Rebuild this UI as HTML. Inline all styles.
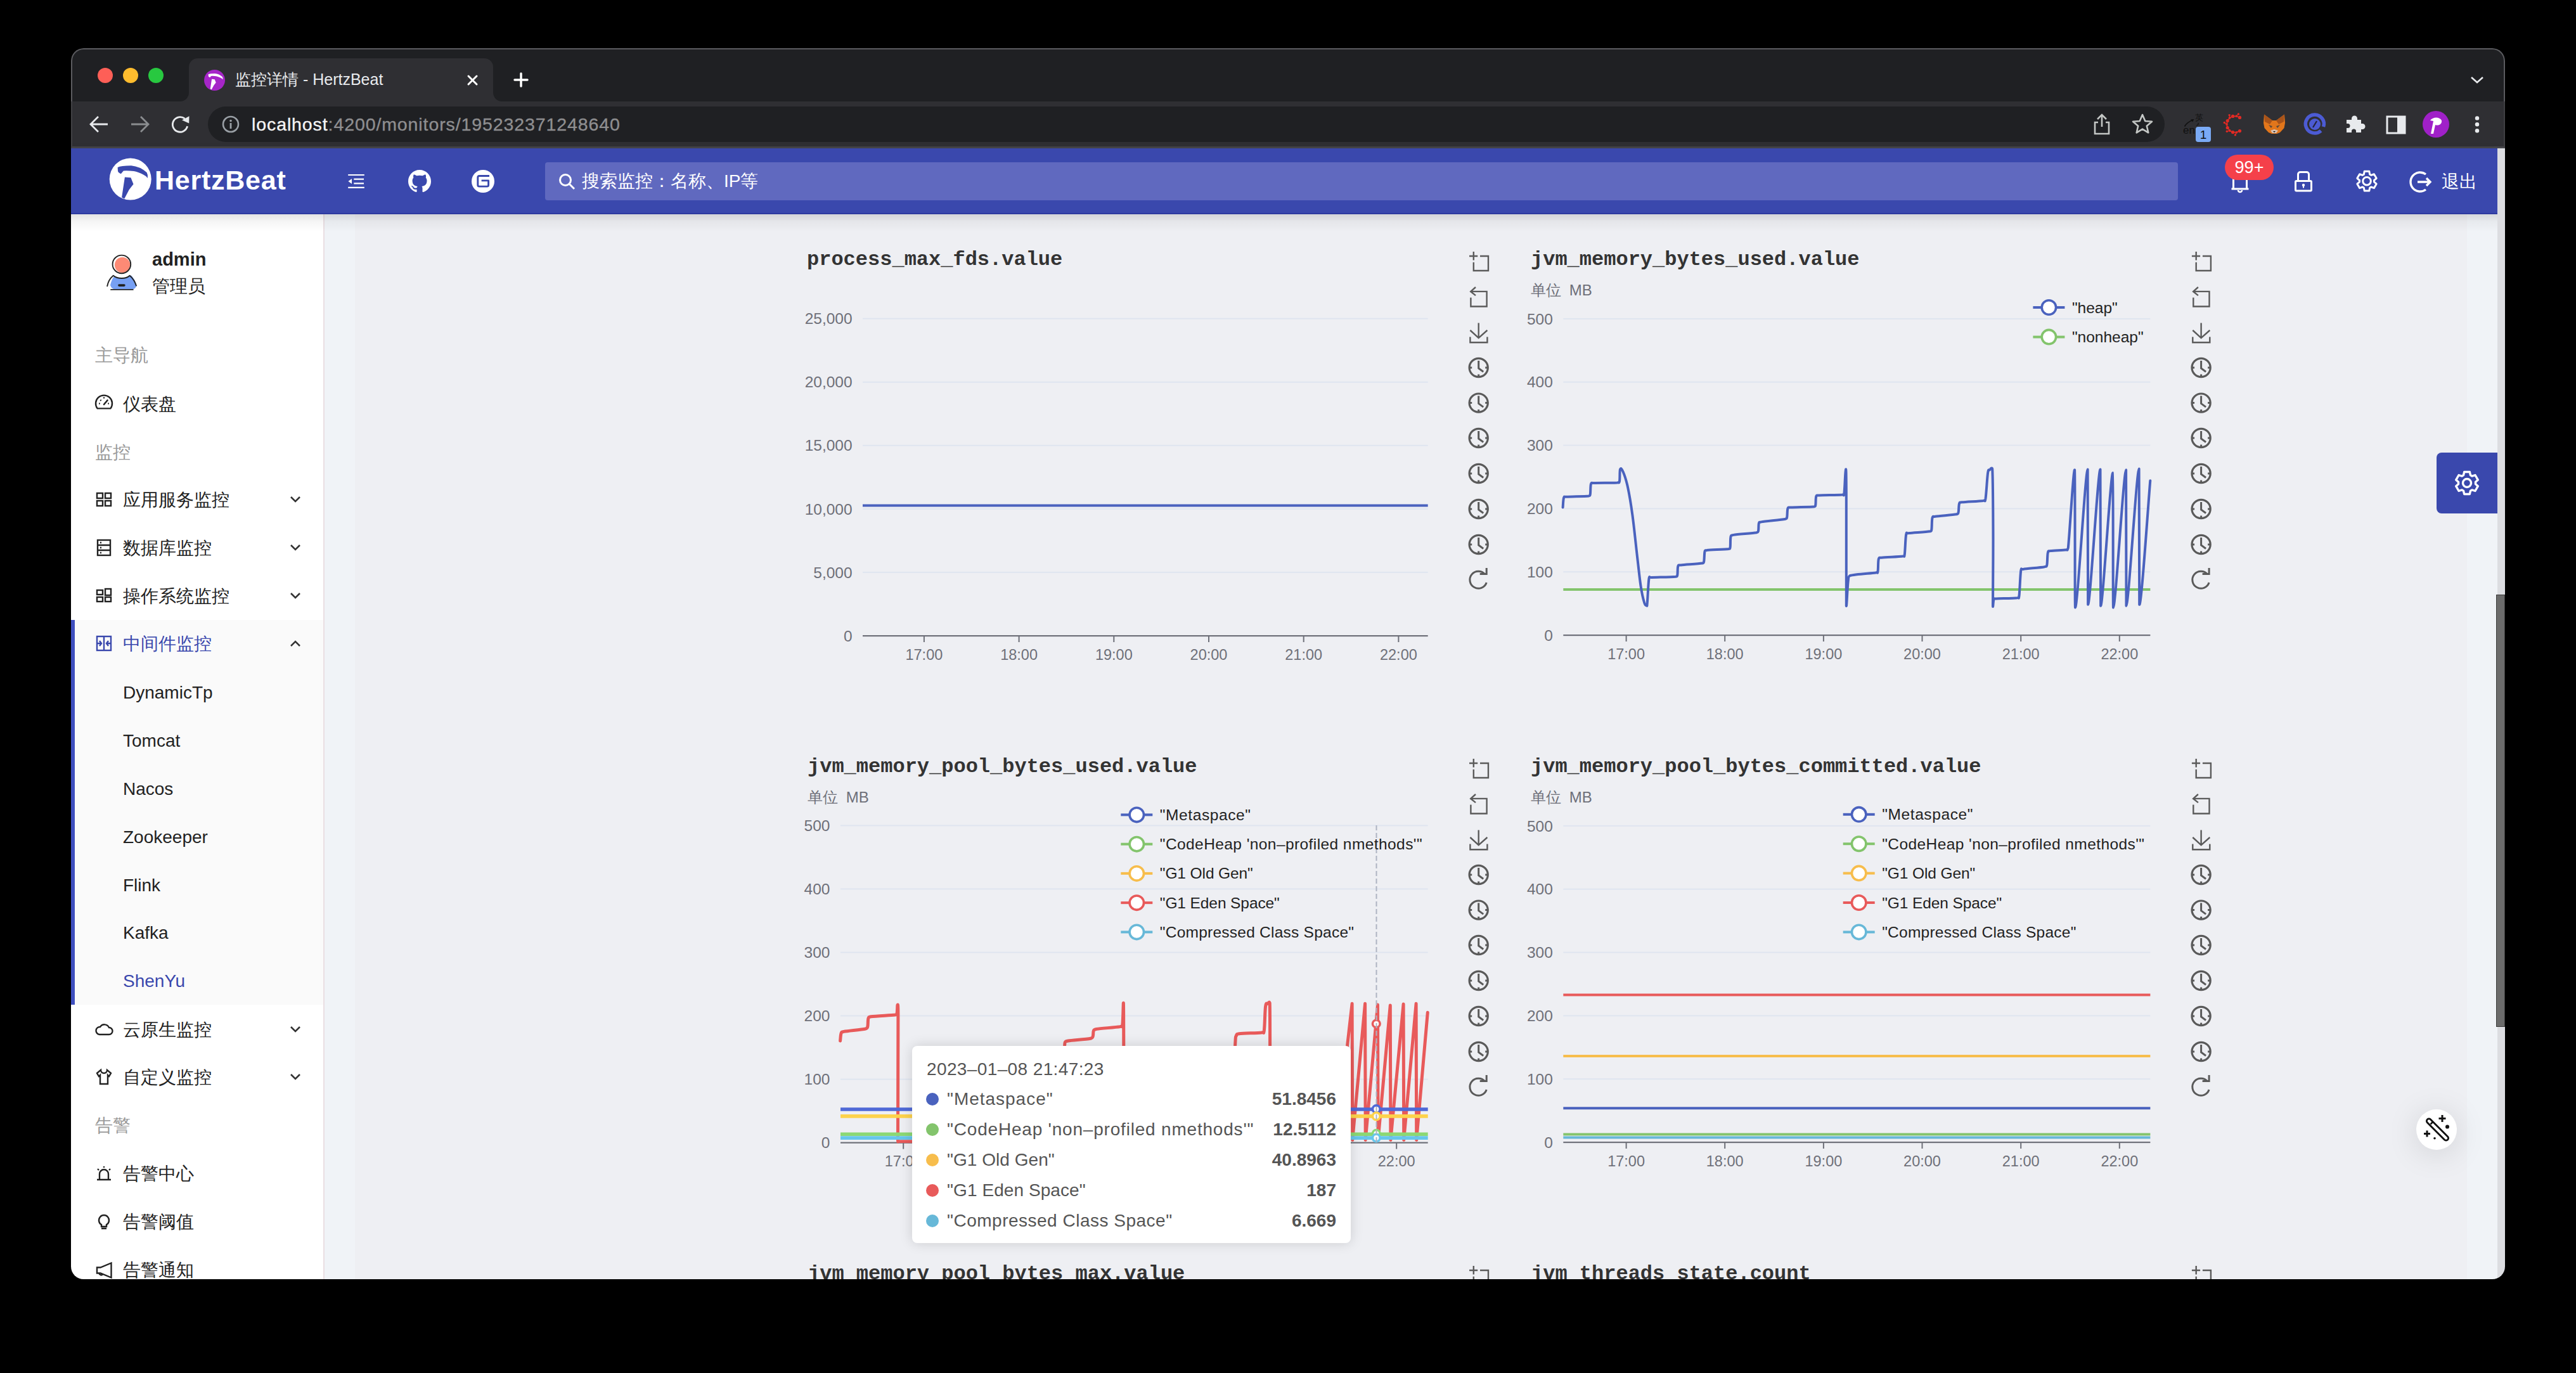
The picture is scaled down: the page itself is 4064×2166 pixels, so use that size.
<!DOCTYPE html><html><head><meta charset="utf-8"><style>
*{box-sizing:border-box;margin:0;padding:0}
html,body{width:4064px;height:2166px;overflow:hidden;background:#000;font-family:"Liberation Sans",sans-serif}
.a{position:absolute}
#win{position:absolute;left:0;top:0;width:4064px;height:2166px;clip-path:inset(76px 112px 148px 112px round 20px)}
.t{position:absolute;white-space:nowrap;line-height:1}
svg{position:absolute;overflow:visible}
</style></head><body>
<div id="win">
<div class="a" style="left:112px;top:76px;width:3840px;height:84px;background:#1f2023"></div>
<div class="a" style="left:298px;top:92px;width:480px;height:68px;background:#2f2f33;border-radius:14px 14px 0 0"></div>
<svg style="left:284px;top:146px" width="14" height="14"><path d="M0 14 A14 14 0 0 0 14 0 V14Z" fill="#2f2f33"/></svg>
<svg style="left:778px;top:146px" width="14" height="14"><path d="M14 14 A14 14 0 0 1 0 0 V14Z" fill="#2f2f33"/></svg>
<div class="a" style="left:112px;top:160px;width:3840px;height:72px;background:#2f2f33"></div>
<div class="a" style="left:112px;top:231px;width:3840px;height:3px;background:#47474b"></div>
<div class="a" style="left:112px;top:76px;width:3840px;height:84px;border:2px solid #5b5b5f;border-bottom:none;border-radius:20px 20px 0 0"></div>
<div class="a" style="left:112px;top:160px;width:2px;height:72px;background:#404044"></div>
<div class="a" style="left:3950px;top:160px;width:2px;height:72px;background:#404044"></div>
<div class="a" style="left:154px;top:107px;width:24px;height:24px;border-radius:50%;background:#fe5f57"></div>
<div class="a" style="left:194px;top:107px;width:24px;height:24px;border-radius:50%;background:#febc2e"></div>
<div class="a" style="left:234px;top:107px;width:24px;height:24px;border-radius:50%;background:#28c840"></div>
<div class="a" style="left:322px;top:110px;width:33px;height:33px;border-radius:50%;background:#a626c8"></div>
<svg style="left:322px;top:110px" width="33" height="33" viewBox="0 0 68 66"><path d="M13.6 14 Q18.8 11.4 35 11.3 Q48.7 12.5 59.5 22.1 Q61.8 26 60.9 31 Q58.5 27.5 54.1 25.5 Q46 21 39.1 20 Q30 19 22.8 19.4 L18.8 24.2 Q14.5 22.5 14 20 Z" fill="#fff"/><path d="M24.9 29.6 L34.4 30.3 L38.5 40.5 L31.7 49.3 L24.2 63.6 L20.1 61.5 Z" fill="#fff"/></svg>
<div class="t" style="left:371px;top:113px;font-size:25px;color:#e8eaed">监控详情 - HertzBeat</div>
<svg style="left:737px;top:118px" width="17" height="17"><path d="M2 2L15 15M15 2L2 15" stroke="#fff" stroke-width="3" stroke-linecap="round"/></svg>
<svg style="left:810px;top:114px" width="24" height="24"><path d="M12 2V22M2 12H22" stroke="#fff" stroke-width="3.5" stroke-linecap="round"/></svg>
<svg style="left:3896px;top:118px" width="24" height="16"><path d="M3 4L12 12L21 4" stroke="#e8eaed" stroke-width="2.6" fill="none"/></svg>
<svg style="left:139px;top:180px" width="34" height="32"><path d="M31 16H4M16 4L4 16L16 28" stroke="#e8eaed" stroke-width="2.8" fill="none"/></svg>
<svg style="left:204px;top:180px" width="34" height="32"><path d="M3 16H30M18 4L30 16L18 28" stroke="#8b8d90" stroke-width="2.8" fill="none"/></svg>
<svg style="left:268px;top:180px" width="34" height="34"><path d="M27.6 19.2A11.8 11.8 0 1 1 23.5 7.2" stroke="#e8eaed" stroke-width="2.8" fill="none"/><path d="M19 9.6L30.5 3.2L30.2 14.5Z" fill="#e8eaed"/></svg>
<div class="a" style="left:328px;top:168px;width:3087px;height:56px;border-radius:28px;background:#1f2023"></div>
<svg style="left:350px;top:182px" width="28" height="28"><circle cx="14" cy="14" r="12" stroke="#9aa0a6" stroke-width="2.6" fill="none"/><rect x="12.6" y="12" width="2.8" height="9" fill="#9aa0a6"/><circle cx="14" cy="8.5" r="1.8" fill="#9aa0a6"/></svg>
<div class="t" style="left:397px;top:182px;font-size:28.5px;letter-spacing:0.9px;color:#f4f4f4;-webkit-text-stroke:0.35px #f4f4f4">localhost<span style="color:#8e8e90;-webkit-text-stroke:0.35px #8e8e90">:4200/monitors/195232371248640</span></div>
<svg style="left:3300px;top:178px" width="32" height="36"><path d="M16 3V22M9 10L16 3L23 10" stroke="#c4c7c5" stroke-width="2.6" fill="none"/><path d="M10 15H5V33H27V15H22" stroke="#c4c7c5" stroke-width="2.6" fill="none"/></svg>
<svg style="left:3362px;top:178px" width="36" height="36"><path d="M18 3L22.3 13L33 13.8L24.8 20.8L27.3 31.3L18 25.6L8.7 31.3L11.2 20.8L3 13.8L13.7 13Z" stroke="#c4c7c5" stroke-width="2.6" fill="none" stroke-linejoin="round"/></svg>
<div class="t" style="left:3444px;top:197px;font-size:17px;color:#111">en</div>
<div class="t" style="left:3463px;top:179px;font-size:13px;color:#111">英</div>
<svg style="left:3440px;top:180px" width="30" height="24"><path d="M6.5 19.5Q10 13 20 9" stroke="#111" stroke-width="1.6" fill="none"/><path d="M21.5 8L16 8.5L19 12.5Z" fill="#111"/><path d="M28 14Q29 17 25 18" stroke="#111" stroke-width="1.2" fill="none"/></svg>
<div class="a" style="left:3464px;top:200px;width:24px;height:24px;border-radius:4px;background:#7aaaf5;color:#111;font-size:19px;text-align:center;line-height:25px">1</div>
<svg style="left:3505px;top:176px" width="40" height="40"><path d="M28.5 9.4 L23.3 7.2 L17.6 7.4 L12.6 10.0 L9.2 14.5 L8.0 20.0 L9.2 25.5 L12.6 30.0 L17.6 32.6 L23.3 32.8 L28.5 30.6" stroke="#e02a24" stroke-width="1.6" fill="none"/><circle cx="28.5" cy="9.4" r="2.6" fill="#e02a24"/><circle cx="23.3" cy="7.2" r="1.9" fill="#e02a24"/><path d="M23.3 7.2L26.4 4.0" stroke="#e02a24" stroke-width="1.2"/><circle cx="26.4" cy="4.0" r="1.7" fill="#e02a24"/><circle cx="17.6" cy="7.4" r="2.6" fill="#e02a24"/><circle cx="12.6" cy="10.0" r="1.9" fill="#e02a24"/><path d="M12.6 10.0L12.2 5.6" stroke="#e02a24" stroke-width="1.2"/><circle cx="12.2" cy="5.6" r="1.7" fill="#e02a24"/><circle cx="9.2" cy="14.5" r="2.6" fill="#e02a24"/><circle cx="8.0" cy="20.0" r="1.9" fill="#e02a24"/><path d="M8.0 20.0L4.3 17.5" stroke="#e02a24" stroke-width="1.2"/><circle cx="4.3" cy="17.5" r="1.7" fill="#e02a24"/><circle cx="9.2" cy="25.5" r="2.6" fill="#e02a24"/><circle cx="12.6" cy="30.0" r="1.9" fill="#e02a24"/><path d="M12.6 30.0L8.3 31.2" stroke="#e02a24" stroke-width="1.2"/><circle cx="8.3" cy="31.2" r="1.7" fill="#e02a24"/><circle cx="17.6" cy="32.6" r="2.6" fill="#e02a24"/><circle cx="23.3" cy="32.8" r="1.9" fill="#e02a24"/><path d="M23.3 32.8L21.4 36.9" stroke="#e02a24" stroke-width="1.2"/><circle cx="21.4" cy="36.9" r="1.7" fill="#e02a24"/><circle cx="28.5" cy="30.6" r="2.6" fill="#e02a24"/></svg>
<svg style="left:3570px;top:179px" width="36" height="34"><path d="M2 1.5L15 11H21L34 1.5L35 15L33.5 23L27 30L22 32H14L9 30L2.5 23L1 15Z" fill="#e2761b"/><path d="M2 1.5L15 11L11 17L3 13Z M34 1.5L21 11L25 17L33 13Z" fill="#a8531a"/><path d="M9 18L15 20L13 23Z M27 18L21 20L23 23Z" fill="#233447" opacity=".7"/><path d="M12 27L18 25L24 27L21 31H15Z" fill="#d7c1b3"/><path d="M16 28H20L18 30Z" fill="#111"/></svg>
<svg style="left:3634px;top:178px" width="36" height="36"><path d="M27.6 28.2A14.5 14.5 0 1 1 31.6 22" stroke="#4c5bd4" stroke-width="5.5" fill="none"/><circle cx="18" cy="18" r="9" fill="#4c5bd4"/><path d="M15 23L21 13" stroke="#23243a" stroke-width="2.2"/></svg>
<svg style="left:3698px;top:178px" width="36" height="36"><path d="M4 11H12V9A4.5 4.5 0 0 1 21 9V11H27V17H29A4.5 4.5 0 0 1 29 26H27V31H19V29A3.5 3.5 0 0 0 12 29V31H4V24H6A3.5 3.5 0 0 0 6 17H4Z" fill="#e8eaed"/></svg>
<svg style="left:3764px;top:182px" width="32" height="30"><rect x="2" y="2" width="28" height="26" stroke="#e8eaed" stroke-width="3" fill="none"/><rect x="18" y="2" width="12" height="26" fill="#e8eaed"/></svg>
<div class="a" style="left:3822px;top:175px;width:42px;height:42px;border-radius:50%;background:#a020c8"></div>
<svg style="left:3822px;top:175px" width="42" height="42"><path d="M12 15C16 9 27 9 30 15C31 21 25 24 20 22L17 36L13 36L17 16" fill="#fff"/></svg>
<svg style="left:3900px;top:180px" width="16" height="34"><circle cx="8" cy="6.4" r="3.2" fill="#e8eaed"/><circle cx="8" cy="16.2" r="3.2" fill="#e8eaed"/><circle cx="8" cy="26.2" r="3.2" fill="#e8eaed"/></svg>
<div class="a" style="left:112px;top:234px;width:3828px;height:104px;background:#3a48ad;box-shadow:0 2px 10px rgba(0,0,0,.18)"></div>
<div class="a" style="left:112px;top:336px;width:3828px;height:2px;background:#2d3aa0"></div>
<svg style="left:172px;top:250px" width="68" height="66"><circle cx="33.7" cy="32.6" r="33" fill="#fff"/><path d="M13.6 14 Q18.8 11.4 35 11.3 Q48.7 12.5 59.5 22.1 Q61.8 26 60.9 31 Q58.5 27.5 54.1 25.5 Q46 21 39.1 20 Q30 19 22.8 19.4 L18.8 24.2 Q14.5 22.5 14 20 Z" fill="#3a48ad"/><path d="M24.9 29.6 L34.4 30.3 L38.5 40.5 L31.7 49.3 L24.2 63.6 L20.1 61.5 Z" fill="#3a48ad"/></svg>
<div class="t" style="left:244px;top:263px;font-size:43px;font-weight:bold;color:#fff;letter-spacing:0.75px">HertzBeat</div>
<svg style="left:546px;top:272px" width="32" height="28"><path d="M3.2 4H28.8M12.3 10.7H28M12.3 17.4H28M3.2 23.9H28.8" stroke="#fff" stroke-width="2.2"/><path d="M3.4 14L9 10V18.1Z" fill="#fff"/></svg>
<svg style="left:644px;top:268px" width="36" height="36" viewBox="0 0 16 16"><path fill="#fff" d="M8 0C3.58 0 0 3.58 0 8c0 3.54 2.29 6.53 5.47 7.59.4.07.55-.17.55-.38 0-.19-.01-.82-.01-1.49-2.01.37-2.53-.49-2.69-.94-.09-.23-.48-.94-.82-1.13-.28-.15-.68-.52-.01-.53.63-.01 1.08.58 1.23.82.72 1.21 1.87.87 2.33.66.07-.52.28-.87.51-1.07-1.78-.2-3.64-.89-3.64-3.95 0-.87.31-1.59.82-2.15-.08-.2-.36-1.02.08-2.12 0 0 .67-.21 2.2.82.64-.18 1.32-.27 2-.27.68 0 1.36.09 2 .27 1.53-1.04 2.2-.82 2.2-.82.44 1.1.16 1.92.08 2.12.51.56.82 1.27.82 2.15 0 3.07-1.87 3.75-3.65 3.95.29.25.54.73.54 1.48 0 1.07-.01 1.93-.01 2.2 0 .21.15.46.55.38A8.013 8.013 0 0016 8c0-4.42-3.58-8-8-8z"/></svg>
<svg style="left:744px;top:268px" width="36" height="36"><circle cx="18" cy="18" r="18" fill="#fff"/><path d="M28 9.5H12.2Q9.8 9.5 9.8 12V24Q9.8 26.1 12.2 26.1H24.3Q26.6 26.1 26.6 24V16.9H15.6" stroke="#3a48ad" stroke-width="2.9" fill="none" stroke-linejoin="round"/></svg>
<div class="a" style="left:860px;top:256px;width:2576px;height:60px;border-radius:4px;background:#6069bf"></div>
<svg style="left:880px;top:272px" width="30" height="30"><circle cx="12" cy="12" r="8.5" stroke="#fff" stroke-width="3" fill="none"/><path d="M18.5 18.5L26 26" stroke="#fff" stroke-width="3"/></svg>
<div class="t" style="left:918px;top:272px;font-size:28px;color:#fff">搜索监控：名称、IP等</div>
<svg style="left:3516px;top:266px" width="36" height="44"><path d="M7.5 32V17A10.5 10.5 0 0 1 28.5 17V32M4.5 32H31.5" stroke="#fff" stroke-width="3" fill="none" stroke-linejoin="round"/><path d="M15 34A3 3 0 0 0 21 34" stroke="#fff" stroke-width="2.6" fill="none"/></svg>
<div class="a" style="left:3510px;top:244px;width:77px;height:40px;border-radius:20px;background:#f5404a;color:#fff;font-size:27px;text-align:center;line-height:40px">99+</div>
<svg style="left:3617px;top:266px" width="34" height="40"><path d="M8.5 18V9A3.5 3.5 0 0 1 12 5.5H22A3.5 3.5 0 0 1 25.5 9V18" stroke="#fff" stroke-width="3" fill="none"/><rect x="4.5" y="19.5" width="25" height="15.5" rx="1.5" stroke="#fff" stroke-width="3" fill="none"/><circle cx="17" cy="26" r="2.2" fill="#fff"/><rect x="16" y="26" width="2" height="4.5" fill="#fff"/></svg>
<svg style="left:3712px;top:264px" width="44" height="44"><path d="M17.32 11.19 L18.18 6.37 L25.82 6.37 L26.68 11.19 A11.50 11.50 0 0 1 28.76 12.40 L33.37 10.72 L37.19 17.34 L33.44 20.50 A11.50 11.50 0 0 1 33.44 22.90 L37.19 26.06 L33.37 32.68 L28.76 31.00 A11.50 11.50 0 0 1 26.68 32.21 L25.82 37.03 L18.18 37.03 L17.32 32.21 A11.50 11.50 0 0 1 15.24 31.00 L10.63 32.68 L6.81 26.06 L10.56 22.90 A11.50 11.50 0 0 1 10.56 20.50 L6.81 17.34 L10.63 10.72 L15.24 12.40 A11.50 11.50 0 0 1 17.32 11.19 Z" stroke="#fff" stroke-width="3" fill="none" stroke-linejoin="round"/><circle cx="22" cy="21.7" r="6.3" stroke="#fff" stroke-width="3" fill="none"/></svg>
<svg style="left:3796px;top:265px" width="44" height="44"><path d="M31 10A15 15 0 1 0 31 34" stroke="#fff" stroke-width="3.4" fill="none"/><path d="M18 22H38M32 16L38 22L32 28" stroke="#fff" stroke-width="3.4" fill="none"/></svg>
<div class="t" style="left:3852px;top:273px;font-size:28px;color:#fff">退出</div>
<div class="a" style="left:112px;top:338px;width:398px;height:1680px;background:#fff"></div>
<div class="a" style="left:510px;top:338px;width:2px;height:1680px;background:#eadfe3"></div>
<svg style="left:160px;top:395px" width="64" height="70"><circle cx="33.1" cy="23" r="12.2" fill="#fd8a75"/><circle cx="31.9" cy="21.9" r="14.3" fill="none" stroke="#222" stroke-width="1.9"/><path d="M20 41Q16 46 14 55Q16 61 22 61.5H48Q54 61 55.5 55Q53 46 47 39.5Q40 44 32 44Q24 44 18.7 39.7Z" fill="#77a0f4"/><path d="M9 57Q11 46 18.7 39.7Q24 44 32 44Q40 44 44.7 39.7Q52 46 55.2 56.4" fill="none" stroke="#222" stroke-width="1.9" stroke-linejoin="round"/><path d="M15 61.9H49.8" stroke="#222" stroke-width="1.9" stroke-linecap="round"/><rect x="26.1" y="53.3" width="11.6" height="3.6" rx="1.8" fill="#222"/></svg>
<div class="t" style="left:240px;top:394.5px;font-size:29px;font-weight:bold;color:#222">admin</div>
<div class="t" style="left:240px;top:438px;font-size:28px;color:#222">管理员</div>
<div class="t" style="left:150px;top:547px;font-size:28px;color:#999">主导航</div>
<div class="t" style="left:194px;top:624px;font-size:28px;color:#222">仪表盘</div>
<div class="t" style="left:150px;top:700px;font-size:28px;color:#999">监控</div>
<div class="t" style="left:194px;top:775px;font-size:28px;color:#222">应用服务监控</div>
<svg style="left:456px;top:781px" width="20" height="14"><path d="M3 3L10 10L17 3" stroke="#333" stroke-width="2.6" fill="none"/></svg>
<div class="t" style="left:194px;top:851px;font-size:28px;color:#222">数据库监控</div>
<svg style="left:456px;top:857px" width="20" height="14"><path d="M3 3L10 10L17 3" stroke="#333" stroke-width="2.6" fill="none"/></svg>
<div class="t" style="left:194px;top:927px;font-size:28px;color:#222">操作系统监控</div>
<svg style="left:456px;top:933px" width="20" height="14"><path d="M3 3L10 10L17 3" stroke="#333" stroke-width="2.6" fill="none"/></svg>
<div class="a" style="left:112px;top:978px;width:398px;height:607px;background:#fafafa"></div>
<div class="a" style="left:112px;top:978px;width:6px;height:607px;background:#3f4fbf"></div>
<div class="t" style="left:194px;top:1002px;font-size:28px;color:#3a48ad">中间件监控</div>
<svg style="left:456px;top:1008px" width="20" height="14"><path d="M3 11L10 4L17 11" stroke="#333" stroke-width="2.6" fill="none"/></svg>
<div class="t" style="left:194px;top:1079px;font-size:28px;color:#222">DynamicTp</div>
<div class="t" style="left:194px;top:1155px;font-size:28px;color:#222">Tomcat</div>
<div class="t" style="left:194px;top:1231px;font-size:28px;color:#222">Nacos</div>
<div class="t" style="left:194px;top:1307px;font-size:28px;color:#222">Zookeeper</div>
<div class="t" style="left:194px;top:1383px;font-size:28px;color:#222">Flink</div>
<div class="t" style="left:194px;top:1458px;font-size:28px;color:#222">Kafka</div>
<div class="t" style="left:194px;top:1534px;font-size:28px;color:#3a48ad">ShenYu</div>
<div class="t" style="left:194px;top:1611px;font-size:28px;color:#222">云原生监控</div>
<svg style="left:456px;top:1617px" width="20" height="14"><path d="M3 3L10 10L17 3" stroke="#333" stroke-width="2.6" fill="none"/></svg>
<div class="t" style="left:194px;top:1686px;font-size:28px;color:#222">自定义监控</div>
<svg style="left:456px;top:1692px" width="20" height="14"><path d="M3 3L10 10L17 3" stroke="#333" stroke-width="2.6" fill="none"/></svg>
<div class="t" style="left:150px;top:1762px;font-size:28px;color:#999">告警</div>
<div class="t" style="left:194px;top:1838px;font-size:28px;color:#222">告警中心</div>
<div class="t" style="left:194px;top:1914px;font-size:28px;color:#222">告警阈值</div>
<div class="t" style="left:194px;top:1990px;font-size:28px;color:#222">告警通知</div>
<svg style="left:150px;top:623px" width="28" height="28"><path d="M3.6 21.4A13 13 0 1 1 24.4 21.4Z" stroke="#222" stroke-width="2.4" fill="none"/><path d="M14 15L19.5 8.5" stroke="#222" stroke-width="2.6" stroke-linecap="round"/><path d="M6 13.6H7.8M20.2 13.6H22M14 3.6V5.4M8.3 7.9L9.5 9.1" stroke="#222" stroke-width="2.4" fill="none"/></svg>
<svg style="left:150px;top:774px" width="28" height="28"><rect x="3" y="4" width="9" height="8" stroke="#222" stroke-width="2.4" fill="none"/><rect x="16" y="4" width="9" height="8" stroke="#222" stroke-width="2.4" fill="none"/><rect x="3" y="16" width="9" height="8" stroke="#222" stroke-width="2.4" fill="none"/><rect x="16" y="16" width="9" height="8" stroke="#222" stroke-width="2.4" fill="none"/></svg>
<svg style="left:150px;top:850px" width="28" height="28"><rect x="4" y="2" width="20" height="24" stroke="#222" stroke-width="2.4" fill="none"/><path d="M4 10H24M4 18H24M8 6H10M8 14H10M8 22H10" stroke="#222" stroke-width="2.4" fill="none"/></svg>
<svg style="left:150px;top:926px" width="28" height="28"><rect x="3" y="5" width="9" height="7" stroke="#222" stroke-width="2.4" fill="none"/><rect x="16" y="3" width="9" height="10" stroke="#222" stroke-width="2.4" fill="none"/><rect x="3" y="16" width="9" height="7" stroke="#222" stroke-width="2.4" fill="none"/><rect x="16" y="16" width="9" height="7" stroke="#222" stroke-width="2.4" fill="none"/></svg>
<svg style="left:150px;top:1001px" width="28" height="28"><rect x="3" y="3" width="22" height="22" stroke="#3a48ad" stroke-width="2.4" fill="none"/><path d="M14 3V25M3 14H10M18 14H25M7 10L10 14L7 18M21 10L18 14L21 18" stroke="#3a48ad" stroke-width="2.4" fill="none"/></svg>
<svg style="left:150px;top:1610px" width="28" height="28"><path d="M7 22A6 6 0 0 1 8 10A8 8 0 0 1 22 11A5.5 5.5 0 0 1 22 22Z" stroke="#222" stroke-width="2.4" fill="none"/></svg>
<svg style="left:150px;top:1685px" width="28" height="28"><path d="M9 3L3 8L6 13L8 11V25H20V11L22 13L25 8L19 3A5 5 0 0 1 9 3Z" stroke="#222" stroke-width="2.4" fill="none"/></svg>
<svg style="left:150px;top:1837px" width="28" height="28"><path d="M7 23V15A7 7 0 0 1 21 15V23M3 24H25M14 3V5M4 7L6 9M24 7L22 9" stroke="#222" stroke-width="2.4" fill="none"/></svg>
<svg style="left:150px;top:1913px" width="28" height="28"><path d="M10 19A8 8 0 1 1 18 19V22H10Z M10 25H18" stroke="#222" stroke-width="2.4" fill="none"/></svg>
<svg style="left:150px;top:1989px" width="30" height="30"><path d="M3 10.5H8.5L25.5 3.5V26.5L8.5 19.5H3Z" stroke="#222" stroke-width="2.4" fill="none"/><path d="M6.5 20A3 3 0 0 0 12 21" stroke="#222" stroke-width="2.4" fill="none"/></svg>
<div class="a" style="left:512px;top:338px;width:3428px;height:1680px;background:#f0f3f7"></div>
<div class="a" style="left:560px;top:338px;width:3332px;height:1680px;background:#eeeff3"></div>
<div class="a" style="left:112px;top:338px;width:3828px;height:28px;background:linear-gradient(rgba(0,0,0,.11),rgba(0,0,0,.04) 40%,rgba(0,0,0,0))"></div>
<svg style="left:0;top:0" width="4064" height="2166">
<text x="1273" y="418" font-family="'Liberation Mono', monospace" font-weight="bold" font-size="32" fill="#333">process_max_fds.value</text>
<rect x="1361" y="501.7" width="891.7" height="2" fill="#dfe5f0"/>
<text x="1344.6" y="511.3" text-anchor="end" font-family="'Liberation Sans', sans-serif" font-size="24.5" fill="#6e7079">25,000</text>
<rect x="1361" y="601.8" width="891.7" height="2" fill="#dfe5f0"/>
<text x="1344.6" y="611.4" text-anchor="end" font-family="'Liberation Sans', sans-serif" font-size="24.5" fill="#6e7079">20,000</text>
<rect x="1361" y="701.8" width="891.7" height="2" fill="#dfe5f0"/>
<text x="1344.6" y="711.4" text-anchor="end" font-family="'Liberation Sans', sans-serif" font-size="24.5" fill="#6e7079">15,000</text>
<rect x="1361" y="801.9" width="891.7" height="2" fill="#dfe5f0"/>
<text x="1344.6" y="811.5" text-anchor="end" font-family="'Liberation Sans', sans-serif" font-size="24.5" fill="#6e7079">10,000</text>
<rect x="1361" y="901.9" width="891.7" height="2" fill="#dfe5f0"/>
<text x="1344.6" y="911.5" text-anchor="end" font-family="'Liberation Sans', sans-serif" font-size="24.5" fill="#6e7079">5,000</text>
<text x="1344.6" y="1011.6" text-anchor="end" font-family="'Liberation Sans', sans-serif" font-size="24.5" fill="#6e7079">0</text>
<rect x="1361" y="1002.0" width="891.7" height="2.2" fill="#6e7079"/>
<rect x="1456.9" y="1003" width="2" height="10" fill="#6e7079"/>
<text x="1457.9" y="1040.5" text-anchor="middle" font-family="'Liberation Sans', sans-serif" font-size="23.5" fill="#6e7079">17:00</text>
<rect x="1606.6" y="1003" width="2" height="10" fill="#6e7079"/>
<text x="1607.6" y="1040.5" text-anchor="middle" font-family="'Liberation Sans', sans-serif" font-size="23.5" fill="#6e7079">18:00</text>
<rect x="1756.3" y="1003" width="2" height="10" fill="#6e7079"/>
<text x="1757.3" y="1040.5" text-anchor="middle" font-family="'Liberation Sans', sans-serif" font-size="23.5" fill="#6e7079">19:00</text>
<rect x="1906.0" y="1003" width="2" height="10" fill="#6e7079"/>
<text x="1907.0" y="1040.5" text-anchor="middle" font-family="'Liberation Sans', sans-serif" font-size="23.5" fill="#6e7079">20:00</text>
<rect x="2055.7" y="1003" width="2" height="10" fill="#6e7079"/>
<text x="2056.7" y="1040.5" text-anchor="middle" font-family="'Liberation Sans', sans-serif" font-size="23.5" fill="#6e7079">21:00</text>
<rect x="2205.4" y="1003" width="2" height="10" fill="#6e7079"/>
<text x="2206.4" y="1040.5" text-anchor="middle" font-family="'Liberation Sans', sans-serif" font-size="23.5" fill="#6e7079">22:00</text>
<path d="M1361 797.5 L2252.7 797.5" stroke="#4a62be" stroke-width="4" fill="none" stroke-linejoin="round" stroke-linecap="butt"/>
<path d="M2318.0 404H2331.2M2324.7999999999997 397V410.5M2324.7999999999997 413.7V427H2348.0V404H2335.0" stroke="#5a5a5a" stroke-width="2.4" fill="none"/>
<path d="M2320.3999999999996 469.5V483.5H2345.6V459.9H2320.7M2328.0 453.0L2320.2 459.9L2328.0 466.1" stroke="#5a5a5a" stroke-width="2.4" fill="none"/>
<path d="M2332.7 509.5V533.1M2319.3999999999996 521.0L2332.7 533.1L2346.3999999999996 521.0M2319.3999999999996 531.5V540.3H2346.3999999999996V531.5" stroke="#5a5a5a" stroke-width="2.4" fill="none"/>
<circle cx="2332.7" cy="580" r="14.6" stroke="#5a5a5a" stroke-width="3.2" fill="none"/>
<path d="M2332.7 569V581L2340.2 586.5" stroke="#5a5a5a" stroke-width="3" fill="none"/>
<path d="M2318.7 580H2322.2M2346.7 580H2343.2M2332.7 594V590.5" stroke="#5a5a5a" stroke-width="3" fill="none"/>
<circle cx="2332.7" cy="635.6" r="14.6" stroke="#5a5a5a" stroke-width="3.2" fill="none"/>
<path d="M2332.7 624.6V636.6L2340.2 642.1" stroke="#5a5a5a" stroke-width="3" fill="none"/>
<path d="M2318.7 635.6H2322.2M2346.7 635.6H2343.2M2332.7 649.6V646.1" stroke="#5a5a5a" stroke-width="3" fill="none"/>
<circle cx="2332.7" cy="691" r="14.6" stroke="#5a5a5a" stroke-width="3.2" fill="none"/>
<path d="M2332.7 680V692L2340.2 697.5" stroke="#5a5a5a" stroke-width="3" fill="none"/>
<path d="M2318.7 691H2322.2M2346.7 691H2343.2M2332.7 705V701.5" stroke="#5a5a5a" stroke-width="3" fill="none"/>
<circle cx="2332.7" cy="747" r="14.6" stroke="#5a5a5a" stroke-width="3.2" fill="none"/>
<path d="M2332.7 736V748L2340.2 753.5" stroke="#5a5a5a" stroke-width="3" fill="none"/>
<path d="M2318.7 747H2322.2M2346.7 747H2343.2M2332.7 761V757.5" stroke="#5a5a5a" stroke-width="3" fill="none"/>
<circle cx="2332.7" cy="803" r="14.6" stroke="#5a5a5a" stroke-width="3.2" fill="none"/>
<path d="M2332.7 792V804L2340.2 809.5" stroke="#5a5a5a" stroke-width="3" fill="none"/>
<path d="M2318.7 803H2322.2M2346.7 803H2343.2M2332.7 817V813.5" stroke="#5a5a5a" stroke-width="3" fill="none"/>
<circle cx="2332.7" cy="859" r="14.6" stroke="#5a5a5a" stroke-width="3.2" fill="none"/>
<path d="M2332.7 848V860L2340.2 865.5" stroke="#5a5a5a" stroke-width="3" fill="none"/>
<path d="M2318.7 859H2322.2M2346.7 859H2343.2M2332.7 873V869.5" stroke="#5a5a5a" stroke-width="3" fill="none"/>
<path d="M2345.2 919A13.5 13.5 0 1 1 2342.7 906" stroke="#5a5a5a" stroke-width="3" fill="none"/>
<path d="M2334.7 905.5H2345.2V896" stroke="#5a5a5a" stroke-width="3" fill="none"/>
<text x="2415" y="418" font-family="'Liberation Mono', monospace" font-weight="bold" font-size="32" fill="#333">jvm_memory_bytes_used.value</text>
<text x="2415" y="466" font-family="'Liberation Sans', sans-serif" font-size="24" fill="#6e7079">单位 <tspan dx="6">MB</tspan></text>
<rect x="2466.3" y="501.9" width="926.1" height="2" fill="#dfe5f0"/>
<text x="2449.8" y="511.5" text-anchor="end" font-family="'Liberation Sans', sans-serif" font-size="24.5" fill="#6e7079">500</text>
<rect x="2466.3" y="601.7" width="926.1" height="2" fill="#dfe5f0"/>
<text x="2449.8" y="611.3" text-anchor="end" font-family="'Liberation Sans', sans-serif" font-size="24.5" fill="#6e7079">400</text>
<rect x="2466.3" y="701.5" width="926.1" height="2" fill="#dfe5f0"/>
<text x="2449.8" y="711.1" text-anchor="end" font-family="'Liberation Sans', sans-serif" font-size="24.5" fill="#6e7079">300</text>
<rect x="2466.3" y="801.4" width="926.1" height="2" fill="#dfe5f0"/>
<text x="2449.8" y="811.0" text-anchor="end" font-family="'Liberation Sans', sans-serif" font-size="24.5" fill="#6e7079">200</text>
<rect x="2466.3" y="901.2" width="926.1" height="2" fill="#dfe5f0"/>
<text x="2449.8" y="910.8" text-anchor="end" font-family="'Liberation Sans', sans-serif" font-size="24.5" fill="#6e7079">100</text>
<text x="2449.8" y="1010.6" text-anchor="end" font-family="'Liberation Sans', sans-serif" font-size="24.5" fill="#6e7079">0</text>
<rect x="2466.3" y="1001.0" width="926.1" height="2.2" fill="#6e7079"/>
<rect x="2564.6" y="1002" width="2" height="10" fill="#6e7079"/>
<text x="2565.6" y="1039.5" text-anchor="middle" font-family="'Liberation Sans', sans-serif" font-size="23.5" fill="#6e7079">17:00</text>
<rect x="2720.2" y="1002" width="2" height="10" fill="#6e7079"/>
<text x="2721.2" y="1039.5" text-anchor="middle" font-family="'Liberation Sans', sans-serif" font-size="23.5" fill="#6e7079">18:00</text>
<rect x="2875.9" y="1002" width="2" height="10" fill="#6e7079"/>
<text x="2876.9" y="1039.5" text-anchor="middle" font-family="'Liberation Sans', sans-serif" font-size="23.5" fill="#6e7079">19:00</text>
<rect x="3031.5" y="1002" width="2" height="10" fill="#6e7079"/>
<text x="3032.5" y="1039.5" text-anchor="middle" font-family="'Liberation Sans', sans-serif" font-size="23.5" fill="#6e7079">20:00</text>
<rect x="3187.2" y="1002" width="2" height="10" fill="#6e7079"/>
<text x="3188.2" y="1039.5" text-anchor="middle" font-family="'Liberation Sans', sans-serif" font-size="23.5" fill="#6e7079">21:00</text>
<rect x="3342.8" y="1002" width="2" height="10" fill="#6e7079"/>
<text x="3343.8" y="1039.5" text-anchor="middle" font-family="'Liberation Sans', sans-serif" font-size="23.5" fill="#6e7079">22:00</text>
<path d="M2466.3 930 L3392.4 930" stroke="#83c46c" stroke-width="4" fill="none" stroke-linejoin="round" stroke-linecap="butt"/><path d="M2465.6 800.5 C2465.9 797.7 2466.1 788.2 2467.1 785.2 C2468.1 782.2 2467.1 784.2 2471.2 783.7 C2478.3 783.2 2499.8 783.1 2506.6 782.4 C2508.8 781.7 2508.2 782.9 2508.8 779.6 C2509.4 776.3 2509 767 2509.9 763.8 C2510.8 760.6 2509.9 762.3 2514 761.9 C2521.5 761.5 2543.9 761.9 2551.3 761.4 C2555 760.9 2554.2 762.9 2555 759.1 C2555.8 755.3 2555 743.2 2556 740.5 C2557 737.8 2558.4 739.2 2560.6 744.2 C2562.8 749.2 2565.3 756 2568 768.4 C2570.7 780.8 2572.8 793.4 2575.5 813.2 C2578.2 833 2580.6 858.3 2583 878.4 C2585.4 898.5 2586.6 911.9 2588.6 925 C2590.6 938.1 2592.5 945.6 2594.2 951 C2595.9 956.4 2597.1 955.1 2597.9 955.1 C2598.7 955.1 2598.1 958.1 2598.8 951 C2599.5 943.2 2600.4 919.1 2601.6 911.9 C2602.8 908 2601.6 911.4 2605.3 911 C2612.8 910.6 2636.1 910.4 2643.5 909.7 C2646.3 909 2645.6 910.3 2646.3 907.3 C2647 904.3 2646.3 896.2 2647.3 893.3 C2648.3 890.4 2647.3 892.2 2651.9 891.4 C2658.8 890.6 2679 889.6 2685.5 888.6 C2688.2 887.6 2687.5 889.1 2688.2 885.8 C2688.9 882.5 2688.7 873.2 2689.5 870 C2690.3 866.8 2689.5 868.8 2692.9 868.1 C2699.7 867.4 2720.8 866.7 2727.4 865.9 C2729.6 865.1 2729 867 2729.6 863.5 C2730.2 860 2729.6 850.2 2730.5 846.7 C2731.4 843.2 2730.5 845.1 2734.8 843.9 C2742.1 842.7 2764.1 841.4 2771.2 840.2 C2774 839 2773.3 840.1 2774 837.4 C2774.7 834.7 2774.1 827.8 2774.9 825.3 C2775.7 822.8 2774.9 824.6 2778.6 823.4 C2786.1 822.2 2809.5 820.1 2816.8 818.8 C2819.2 817.5 2818.5 819 2819.2 816 C2819.9 813 2819.4 804.8 2820.5 802 C2821.6 799.2 2820.5 801 2825.2 800.5 C2832.8 800 2855.5 799.9 2862.5 799.2 C2864.3 798.5 2863.8 799.3 2864.3 796.4 C2864.8 793.5 2864.3 785.7 2865.3 783 C2866.3 780.3 2865.3 781.9 2869.9 781.5 C2877.3 781.1 2899.1 781.1 2906.2 780.6 C2909.4 780.1 2908.4 783.6 2909.4 778.7 C2910.4 771.5 2911.2 741 2911.8 740.5 C2912.4 740 2912.6 737.5 2912.8 775.9 C2912.8 814.6 2912.8 930.2 2912.8 955.7 C2913.3 958.7 2914.6 926 2915.6 917.5 C2916.6 909 2915.6 910.7 2918.4 908.2 C2926.2 905.7 2951.2 904.7 2959.1 903.5 C2962.5 902.3 2961.7 905.6 2962.5 901.7 C2963.3 897.8 2962.7 886.1 2963.8 882.1 C2964.9 878.1 2963.8 880.5 2968.4 879.7 C2975.3 878.9 2995.4 878.3 3002 877.4 C3004.8 876.5 3003.9 880.4 3004.8 874.7 C3005.7 868.5 3006 849 3007.2 843 C3008.4 838.1 3007.2 841.9 3011.3 841.1 C3018.1 840.3 3038.3 839.3 3044.8 838.3 C3047.3 837.3 3046.6 839.4 3047.3 835.5 C3048 831.6 3047.5 820.6 3048.6 816.9 C3049.7 813.2 3048.6 815.7 3053.2 814.7 C3060.1 813.7 3080.2 812.4 3086.8 811.3 C3089.6 810.2 3088.8 811.5 3089.6 808.5 C3090.4 805.5 3090 797.4 3091 794.5 C3092 791.6 3091 793.1 3095.1 792.3 C3101.9 791.5 3122 790.8 3128.7 789.9 C3132.4 789 3131.1 792.9 3132.4 787.1 C3133.7 779.2 3134.9 754.3 3136.1 746.1 C3137.3 738.4 3137.6 742.6 3138.9 741.4 C3140.2 740.2 3142.2 736.6 3143.2 739.6 C3144.2 759.2 3144.4 811.3 3144.5 850.4 C3144.5 889.5 3144 939.5 3144 956.6 C3144.2 959.6 3144.6 947.7 3145.5 945.5 C3146.4 943.3 3145.5 944.9 3149.2 944.5 C3155.9 944.1 3176.2 944 3182.7 943.2 C3185.5 942.4 3184.5 946.2 3185.5 939.9 C3186.5 932.1 3187.1 907.4 3188.3 899.8 C3189.5 894.9 3188.3 898.9 3192 897.9 C3198.7 896.9 3218.9 895.4 3225.6 894.2 C3229.3 893 3228.4 895.4 3229.3 891.4 C3230.2 887.4 3229.8 875.9 3230.8 871.9 C3231.8 867.9 3230.8 869.9 3234.9 869.1 C3240.2 868.3 3255 868 3260 867.2 C3262.8 866.4 3260.4 870.2 3262.8 864.4 C3265.2 841.8 3271.1 738.4 3273.1 741.4 C3274 758.3 3273.1 958.7 3274 958.5 C3277.7 958.3 3290 741.3 3293.6 740.5 C3294.1 739.7 3293.6 953.8 3294.1 953.8 C3297.7 953.8 3309.9 740.2 3313.5 740.5 C3314.1 740.8 3313.5 954.7 3314.1 955.7 C3317.7 956.7 3329.7 745.6 3333.3 746.1 C3334 746.6 3333.3 959.3 3334 958.5 C3337.7 957.7 3350.4 741.9 3354.1 741.4 C3354.5 740.9 3354.1 956 3354.5 955.7 C3358.2 955.4 3370.9 739.9 3374.6 739.6 C3375.2 739.3 3374.6 950.5 3375.2 953.8 C3378.4 956.8 3389.2 793.4 3392.3 758.2" stroke="#4a62be" stroke-width="4" fill="none" stroke-linejoin="round" stroke-linecap="round"/>
<rect x="3207.4" y="483.0" width="50" height="4" fill="#4a62be"/>
<circle cx="3232.4" cy="485.0" r="11.2" fill="#fff" stroke="#4a62be" stroke-width="3.6"/>
<text x="3268.9" y="493.5" font-family="'Liberation Sans', sans-serif" font-size="24.5" letter-spacing="0" fill="#222">"heap"</text>
<rect x="3207.4" y="529.6" width="50" height="4" fill="#83c46c"/>
<circle cx="3232.4" cy="531.6" r="11.2" fill="#fff" stroke="#83c46c" stroke-width="3.6"/>
<text x="3268.9" y="540.1" font-family="'Liberation Sans', sans-serif" font-size="24.5" letter-spacing="0" fill="#222">"nonheap"</text>
<path d="M3457.9 404H3471.1M3464.7 397V410.5M3464.7 413.7V427H3487.9V404H3474.9" stroke="#5a5a5a" stroke-width="2.4" fill="none"/>
<path d="M3460.2999999999997 469.5V483.5H3485.5V459.9H3460.6M3467.9 453.0L3460.1 459.9L3467.9 466.1" stroke="#5a5a5a" stroke-width="2.4" fill="none"/>
<path d="M3472.6 509.5V533.1M3459.2999999999997 521.0L3472.6 533.1L3486.2999999999997 521.0M3459.2999999999997 531.5V540.3H3486.2999999999997V531.5" stroke="#5a5a5a" stroke-width="2.4" fill="none"/>
<circle cx="3472.6" cy="580" r="14.6" stroke="#5a5a5a" stroke-width="3.2" fill="none"/>
<path d="M3472.6 569V581L3480.1 586.5" stroke="#5a5a5a" stroke-width="3" fill="none"/>
<path d="M3458.6 580H3462.1M3486.6 580H3483.1M3472.6 594V590.5" stroke="#5a5a5a" stroke-width="3" fill="none"/>
<circle cx="3472.6" cy="635.6" r="14.6" stroke="#5a5a5a" stroke-width="3.2" fill="none"/>
<path d="M3472.6 624.6V636.6L3480.1 642.1" stroke="#5a5a5a" stroke-width="3" fill="none"/>
<path d="M3458.6 635.6H3462.1M3486.6 635.6H3483.1M3472.6 649.6V646.1" stroke="#5a5a5a" stroke-width="3" fill="none"/>
<circle cx="3472.6" cy="691" r="14.6" stroke="#5a5a5a" stroke-width="3.2" fill="none"/>
<path d="M3472.6 680V692L3480.1 697.5" stroke="#5a5a5a" stroke-width="3" fill="none"/>
<path d="M3458.6 691H3462.1M3486.6 691H3483.1M3472.6 705V701.5" stroke="#5a5a5a" stroke-width="3" fill="none"/>
<circle cx="3472.6" cy="747" r="14.6" stroke="#5a5a5a" stroke-width="3.2" fill="none"/>
<path d="M3472.6 736V748L3480.1 753.5" stroke="#5a5a5a" stroke-width="3" fill="none"/>
<path d="M3458.6 747H3462.1M3486.6 747H3483.1M3472.6 761V757.5" stroke="#5a5a5a" stroke-width="3" fill="none"/>
<circle cx="3472.6" cy="803" r="14.6" stroke="#5a5a5a" stroke-width="3.2" fill="none"/>
<path d="M3472.6 792V804L3480.1 809.5" stroke="#5a5a5a" stroke-width="3" fill="none"/>
<path d="M3458.6 803H3462.1M3486.6 803H3483.1M3472.6 817V813.5" stroke="#5a5a5a" stroke-width="3" fill="none"/>
<circle cx="3472.6" cy="859" r="14.6" stroke="#5a5a5a" stroke-width="3.2" fill="none"/>
<path d="M3472.6 848V860L3480.1 865.5" stroke="#5a5a5a" stroke-width="3" fill="none"/>
<path d="M3458.6 859H3462.1M3486.6 859H3483.1M3472.6 873V869.5" stroke="#5a5a5a" stroke-width="3" fill="none"/>
<path d="M3485.1 919A13.5 13.5 0 1 1 3482.6 906" stroke="#5a5a5a" stroke-width="3" fill="none"/>
<path d="M3474.6 905.5H3485.1V896" stroke="#5a5a5a" stroke-width="3" fill="none"/>
<text x="1274" y="1218" font-family="'Liberation Mono', monospace" font-weight="bold" font-size="32" fill="#333">jvm_memory_pool_bytes_used.value</text>
<text x="1274" y="1266" font-family="'Liberation Sans', sans-serif" font-size="24" fill="#6e7079">单位 <tspan dx="6">MB</tspan></text>
<rect x="1326" y="1301.4" width="926.7" height="2" fill="#dfe5f0"/>
<text x="1309.5" y="1311.0" text-anchor="end" font-family="'Liberation Sans', sans-serif" font-size="24.5" fill="#6e7079">500</text>
<rect x="1326" y="1401.4" width="926.7" height="2" fill="#dfe5f0"/>
<text x="1309.5" y="1411.0" text-anchor="end" font-family="'Liberation Sans', sans-serif" font-size="24.5" fill="#6e7079">400</text>
<rect x="1326" y="1501.5" width="926.7" height="2" fill="#dfe5f0"/>
<text x="1309.5" y="1511.1" text-anchor="end" font-family="'Liberation Sans', sans-serif" font-size="24.5" fill="#6e7079">300</text>
<rect x="1326" y="1601.5" width="926.7" height="2" fill="#dfe5f0"/>
<text x="1309.5" y="1611.1" text-anchor="end" font-family="'Liberation Sans', sans-serif" font-size="24.5" fill="#6e7079">200</text>
<rect x="1326" y="1701.6" width="926.7" height="2" fill="#dfe5f0"/>
<text x="1309.5" y="1711.2" text-anchor="end" font-family="'Liberation Sans', sans-serif" font-size="24.5" fill="#6e7079">100</text>
<text x="1309.5" y="1811.2" text-anchor="end" font-family="'Liberation Sans', sans-serif" font-size="24.5" fill="#6e7079">0</text>
<rect x="1326" y="1801.6" width="926.7" height="2.2" fill="#6e7079"/>
<rect x="1424.2" y="1802.6" width="2" height="10" fill="#6e7079"/>
<text x="1425.2" y="1840.1" text-anchor="middle" font-family="'Liberation Sans', sans-serif" font-size="23.5" fill="#6e7079">17:00</text>
<rect x="1579.8" y="1802.6" width="2" height="10" fill="#6e7079"/>
<text x="1580.8" y="1840.1" text-anchor="middle" font-family="'Liberation Sans', sans-serif" font-size="23.5" fill="#6e7079">18:00</text>
<rect x="1735.4" y="1802.6" width="2" height="10" fill="#6e7079"/>
<text x="1736.4" y="1840.1" text-anchor="middle" font-family="'Liberation Sans', sans-serif" font-size="23.5" fill="#6e7079">19:00</text>
<rect x="1891.0" y="1802.6" width="2" height="10" fill="#6e7079"/>
<text x="1892.0" y="1840.1" text-anchor="middle" font-family="'Liberation Sans', sans-serif" font-size="23.5" fill="#6e7079">20:00</text>
<rect x="2046.6" y="1802.6" width="2" height="10" fill="#6e7079"/>
<text x="2047.6" y="1840.1" text-anchor="middle" font-family="'Liberation Sans', sans-serif" font-size="23.5" fill="#6e7079">21:00</text>
<rect x="2202.2" y="1802.6" width="2" height="10" fill="#6e7079"/>
<text x="2203.2" y="1840.1" text-anchor="middle" font-family="'Liberation Sans', sans-serif" font-size="23.5" fill="#6e7079">22:00</text>
<path d="M1325.6 1642 C1325.9 1639.8 1326.1 1632.5 1327.1 1629.9 C1328.1 1627.3 1327.1 1628.6 1331.2 1627.4 C1338.1 1626.2 1358.8 1624.4 1365.6 1623 C1368.8 1621.6 1368 1622.6 1368.8 1619.6 C1369.6 1616.6 1369 1609.4 1369.9 1606.6 C1370.8 1603.8 1369.9 1604.8 1374 1603.8 C1381.6 1602.8 1404.8 1601.8 1412.2 1601 C1415 1600.2 1414.3 1601.9 1415 1599.1 C1415.7 1596.3 1415.7 1585.2 1416 1585.2 C1416.3 1585.2 1416.8 1582.2 1416.9 1599 C1416.9 1637.4 1416.5 1762.2 1416.5 1798.5 C1416.8 1803.4 1416.5 1800.1 1418.8 1800.4 C1462.6 1800.7 1613.3 1803.4 1660 1800 C1678 1774.7 1674.5 1687.1 1678 1660 C1679.6 1646.4 1679.1 1652.3 1679.6 1649.4 C1680 1646.5 1679.6 1645.1 1680.5 1643.8 C1681.5 1642.5 1680.5 1643 1685.2 1642 C1692.4 1641 1713.6 1639.6 1720.6 1638.3 C1724.3 1637 1723.5 1636.7 1724.3 1634.5 C1725.1 1632.3 1724.3 1628.1 1725.3 1626.1 C1726.3 1624.1 1725.3 1624.6 1729.9 1623.4 C1737.4 1622.2 1759.8 1620.9 1767.2 1619.6 C1770.9 1618.2 1770 1622.6 1770.9 1615.9 C1771.8 1609.2 1772.1 1579.4 1772.4 1582.4 C1772.7 1588.4 1772.7 1610.2 1772.8 1649.4 C1772.9 1688.6 1772.8 1772.9 1773 1800 C1804 1803 1913.4 1803 1945 1800 C1948.6 1772.9 1947.6 1679.4 1948.6 1649.4 C1949.6 1630.6 1949.3 1636.9 1950.5 1633.6 C1951.7 1630.3 1950.5 1631.6 1955.1 1630.8 C1962.3 1630 1983.4 1629.7 1990.5 1628.9 C1994.3 1628.1 1993.2 1631.9 1994.3 1626.1 C1995.4 1618.7 1995.5 1595.7 1996.5 1588 C1997.5 1580.3 1998.7 1584.3 1999.9 1583.3 C2001.1 1582.3 2002.5 1579.4 2003.2 1582.4 C2003.6 1594.3 2003.5 1610.2 2003.6 1649.4 C2003.7 1688.6 2003.6 1772.9 2004 1800 C2025 1803 2099.1 1800 2120 1800" stroke="#e85a5a" stroke-width="5" fill="none" stroke-linejoin="round" stroke-linecap="round"/><path d="M2120 1800 L2125.6 1649.4 L2133.1 1583.3 L2133.7 1798.5 L2153.6 1583.3 L2154.2 1798.5 L2173.5 1585 L2174.1 1798.5 L2193.3 1586 L2193.9 1798.5 L2214.1 1584 L2214.7 1798.5 L2234.1 1583.3 L2234.7 1798.5 L2252.3 1597.3" stroke="#e85a5a" stroke-width="5" fill="none" stroke-linejoin="round" stroke-linecap="round"/><path d="M1326 1789.2 L2252.7 1789.2" stroke="#8bd874" stroke-width="5.6" fill="none" stroke-linejoin="round" stroke-linecap="butt"/><path d="M1326 1795.1 L2252.7 1795.1" stroke="#66c6ec" stroke-width="5.6" fill="none" stroke-linejoin="round" stroke-linecap="butt"/><path d="M1326 1750 L2252.7 1750" stroke="#4f69d6" stroke-width="5.6" fill="none" stroke-linejoin="round" stroke-linecap="butt"/><path d="M1326 1760.9 L2252.7 1760.9" stroke="#fdd24c" stroke-width="5.6" fill="none" stroke-linejoin="round" stroke-linecap="butt"/><circle cx="2171.3" cy="1615" r="5.8" fill="#fff" stroke="#e85a5a" stroke-width="3.6"/><circle cx="2171.3" cy="1749.7" r="5.8" fill="#fff" stroke="#4f69d6" stroke-width="3.6"/><circle cx="2171.3" cy="1760.9" r="5.8" fill="#fff" stroke="#fdd24c" stroke-width="3.6"/><circle cx="2171.3" cy="1788.3" r="5.8" fill="#fff" stroke="#8bd874" stroke-width="3.6"/><circle cx="2171.3" cy="1795.1" r="5.8" fill="#fff" stroke="#66c6ec" stroke-width="3.6"/><path d="M2171.5 1302V1802" stroke="#adb3c2" stroke-width="2" stroke-dasharray="8 4"/>
<rect x="1768.3" y="1283.4" width="50" height="4" fill="#4a62be"/>
<circle cx="1793.3" cy="1285.4" r="11.2" fill="#fff" stroke="#4a62be" stroke-width="3.6"/>
<text x="1829.8" y="1293.9" font-family="'Liberation Sans', sans-serif" font-size="24.5" letter-spacing="0.6" fill="#222">"Metaspace"</text>
<rect x="1768.3" y="1329.65" width="50" height="4" fill="#83c46c"/>
<circle cx="1793.3" cy="1331.65" r="11.2" fill="#fff" stroke="#83c46c" stroke-width="3.6"/>
<text x="1829.8" y="1340.2" font-family="'Liberation Sans', sans-serif" font-size="24.5" letter-spacing="0.42" fill="#222">"CodeHeap 'non–profiled nmethods'"</text>
<rect x="1768.3" y="1375.9" width="50" height="4" fill="#f7bd4c"/>
<circle cx="1793.3" cy="1377.9" r="11.2" fill="#fff" stroke="#f7bd4c" stroke-width="3.6"/>
<text x="1829.8" y="1386.4" font-family="'Liberation Sans', sans-serif" font-size="24.5" letter-spacing="-0.1" fill="#222">"G1 Old Gen"</text>
<rect x="1768.3" y="1422.15" width="50" height="4" fill="#e85a5a"/>
<circle cx="1793.3" cy="1424.15" r="11.2" fill="#fff" stroke="#e85a5a" stroke-width="3.6"/>
<text x="1829.8" y="1432.7" font-family="'Liberation Sans', sans-serif" font-size="24.5" letter-spacing="-0.1" fill="#222">"G1 Eden Space"</text>
<rect x="1768.3" y="1468.4" width="50" height="4" fill="#67b8d8"/>
<circle cx="1793.3" cy="1470.4" r="11.2" fill="#fff" stroke="#67b8d8" stroke-width="3.6"/>
<text x="1829.8" y="1478.9" font-family="'Liberation Sans', sans-serif" font-size="24.5" letter-spacing="0.24" fill="#222">"Compressed Class Space"</text>
<path d="M2318.0 1204H2331.2M2324.7999999999997 1197V1210.5M2324.7999999999997 1213.7V1227H2348.0V1204H2335.0" stroke="#5a5a5a" stroke-width="2.4" fill="none"/>
<path d="M2320.3999999999996 1269.5V1283.5H2345.6V1259.9H2320.7M2328.0 1253.0L2320.2 1259.9L2328.0 1266.1" stroke="#5a5a5a" stroke-width="2.4" fill="none"/>
<path d="M2332.7 1309.5V1333.1M2319.3999999999996 1321.0L2332.7 1333.1L2346.3999999999996 1321.0M2319.3999999999996 1331.5V1340.3H2346.3999999999996V1331.5" stroke="#5a5a5a" stroke-width="2.4" fill="none"/>
<circle cx="2332.7" cy="1380" r="14.6" stroke="#5a5a5a" stroke-width="3.2" fill="none"/>
<path d="M2332.7 1369V1381L2340.2 1386.5" stroke="#5a5a5a" stroke-width="3" fill="none"/>
<path d="M2318.7 1380H2322.2M2346.7 1380H2343.2M2332.7 1394V1390.5" stroke="#5a5a5a" stroke-width="3" fill="none"/>
<circle cx="2332.7" cy="1435.6" r="14.6" stroke="#5a5a5a" stroke-width="3.2" fill="none"/>
<path d="M2332.7 1424.6V1436.6L2340.2 1442.1" stroke="#5a5a5a" stroke-width="3" fill="none"/>
<path d="M2318.7 1435.6H2322.2M2346.7 1435.6H2343.2M2332.7 1449.6V1446.1" stroke="#5a5a5a" stroke-width="3" fill="none"/>
<circle cx="2332.7" cy="1491" r="14.6" stroke="#5a5a5a" stroke-width="3.2" fill="none"/>
<path d="M2332.7 1480V1492L2340.2 1497.5" stroke="#5a5a5a" stroke-width="3" fill="none"/>
<path d="M2318.7 1491H2322.2M2346.7 1491H2343.2M2332.7 1505V1501.5" stroke="#5a5a5a" stroke-width="3" fill="none"/>
<circle cx="2332.7" cy="1547" r="14.6" stroke="#5a5a5a" stroke-width="3.2" fill="none"/>
<path d="M2332.7 1536V1548L2340.2 1553.5" stroke="#5a5a5a" stroke-width="3" fill="none"/>
<path d="M2318.7 1547H2322.2M2346.7 1547H2343.2M2332.7 1561V1557.5" stroke="#5a5a5a" stroke-width="3" fill="none"/>
<circle cx="2332.7" cy="1603" r="14.6" stroke="#5a5a5a" stroke-width="3.2" fill="none"/>
<path d="M2332.7 1592V1604L2340.2 1609.5" stroke="#5a5a5a" stroke-width="3" fill="none"/>
<path d="M2318.7 1603H2322.2M2346.7 1603H2343.2M2332.7 1617V1613.5" stroke="#5a5a5a" stroke-width="3" fill="none"/>
<circle cx="2332.7" cy="1659" r="14.6" stroke="#5a5a5a" stroke-width="3.2" fill="none"/>
<path d="M2332.7 1648V1660L2340.2 1665.5" stroke="#5a5a5a" stroke-width="3" fill="none"/>
<path d="M2318.7 1659H2322.2M2346.7 1659H2343.2M2332.7 1673V1669.5" stroke="#5a5a5a" stroke-width="3" fill="none"/>
<path d="M2345.2 1719A13.5 13.5 0 1 1 2342.7 1706" stroke="#5a5a5a" stroke-width="3" fill="none"/>
<path d="M2334.7 1705.5H2345.2V1696" stroke="#5a5a5a" stroke-width="3" fill="none"/>
<text x="2415" y="1218" font-family="'Liberation Mono', monospace" font-weight="bold" font-size="32" fill="#333">jvm_memory_pool_bytes_committed.value</text>
<text x="2415" y="1266" font-family="'Liberation Sans', sans-serif" font-size="24" fill="#6e7079">单位 <tspan dx="6">MB</tspan></text>
<rect x="2466.3" y="1301.9" width="926.1" height="2" fill="#dfe5f0"/>
<text x="2449.8" y="1311.5" text-anchor="end" font-family="'Liberation Sans', sans-serif" font-size="24.5" fill="#6e7079">500</text>
<rect x="2466.3" y="1401.7" width="926.1" height="2" fill="#dfe5f0"/>
<text x="2449.8" y="1411.3" text-anchor="end" font-family="'Liberation Sans', sans-serif" font-size="24.5" fill="#6e7079">400</text>
<rect x="2466.3" y="1501.5" width="926.1" height="2" fill="#dfe5f0"/>
<text x="2449.8" y="1511.1" text-anchor="end" font-family="'Liberation Sans', sans-serif" font-size="24.5" fill="#6e7079">300</text>
<rect x="2466.3" y="1601.4" width="926.1" height="2" fill="#dfe5f0"/>
<text x="2449.8" y="1611.0" text-anchor="end" font-family="'Liberation Sans', sans-serif" font-size="24.5" fill="#6e7079">200</text>
<rect x="2466.3" y="1701.2" width="926.1" height="2" fill="#dfe5f0"/>
<text x="2449.8" y="1710.8" text-anchor="end" font-family="'Liberation Sans', sans-serif" font-size="24.5" fill="#6e7079">100</text>
<text x="2449.8" y="1810.6" text-anchor="end" font-family="'Liberation Sans', sans-serif" font-size="24.5" fill="#6e7079">0</text>
<rect x="2466.3" y="1801.0" width="926.1" height="2.2" fill="#6e7079"/>
<rect x="2564.6" y="1802" width="2" height="10" fill="#6e7079"/>
<text x="2565.6" y="1839.5" text-anchor="middle" font-family="'Liberation Sans', sans-serif" font-size="23.5" fill="#6e7079">17:00</text>
<rect x="2720.2" y="1802" width="2" height="10" fill="#6e7079"/>
<text x="2721.2" y="1839.5" text-anchor="middle" font-family="'Liberation Sans', sans-serif" font-size="23.5" fill="#6e7079">18:00</text>
<rect x="2875.9" y="1802" width="2" height="10" fill="#6e7079"/>
<text x="2876.9" y="1839.5" text-anchor="middle" font-family="'Liberation Sans', sans-serif" font-size="23.5" fill="#6e7079">19:00</text>
<rect x="3031.5" y="1802" width="2" height="10" fill="#6e7079"/>
<text x="3032.5" y="1839.5" text-anchor="middle" font-family="'Liberation Sans', sans-serif" font-size="23.5" fill="#6e7079">20:00</text>
<rect x="3187.2" y="1802" width="2" height="10" fill="#6e7079"/>
<text x="3188.2" y="1839.5" text-anchor="middle" font-family="'Liberation Sans', sans-serif" font-size="23.5" fill="#6e7079">21:00</text>
<rect x="3342.8" y="1802" width="2" height="10" fill="#6e7079"/>
<text x="3343.8" y="1839.5" text-anchor="middle" font-family="'Liberation Sans', sans-serif" font-size="23.5" fill="#6e7079">22:00</text>
<path d="M2466.3 1794.6 L3392.4 1794.6" stroke="#67b8d8" stroke-width="4" fill="none" stroke-linejoin="round" stroke-linecap="butt"/><path d="M2466.3 1789.6 L3392.4 1789.6" stroke="#83c46c" stroke-width="4" fill="none" stroke-linejoin="round" stroke-linecap="butt"/><path d="M2466.3 1748.3 L3392.4 1748.3" stroke="#4a62be" stroke-width="4" fill="none" stroke-linejoin="round" stroke-linecap="butt"/><path d="M2466.3 1666 L3392.4 1666" stroke="#f7bd4c" stroke-width="4" fill="none" stroke-linejoin="round" stroke-linecap="butt"/><path d="M2466.3 1569.4 L3392.4 1569.4" stroke="#e85a5a" stroke-width="4" fill="none" stroke-linejoin="round" stroke-linecap="butt"/>
<rect x="2907.7" y="1282.8" width="50" height="4" fill="#4a62be"/>
<circle cx="2932.7" cy="1284.8" r="11.2" fill="#fff" stroke="#4a62be" stroke-width="3.6"/>
<text x="2969.2" y="1293.3" font-family="'Liberation Sans', sans-serif" font-size="24.5" letter-spacing="0.6" fill="#222">"Metaspace"</text>
<rect x="2907.7" y="1329.2" width="50" height="4" fill="#83c46c"/>
<circle cx="2932.7" cy="1331.2" r="11.2" fill="#fff" stroke="#83c46c" stroke-width="3.6"/>
<text x="2969.2" y="1339.7" font-family="'Liberation Sans', sans-serif" font-size="24.5" letter-spacing="0.42" fill="#222">"CodeHeap 'non–profiled nmethods'"</text>
<rect x="2907.7" y="1375.6" width="50" height="4" fill="#f7bd4c"/>
<circle cx="2932.7" cy="1377.6" r="11.2" fill="#fff" stroke="#f7bd4c" stroke-width="3.6"/>
<text x="2969.2" y="1386.1" font-family="'Liberation Sans', sans-serif" font-size="24.5" letter-spacing="-0.1" fill="#222">"G1 Old Gen"</text>
<rect x="2907.7" y="1422.0" width="50" height="4" fill="#e85a5a"/>
<circle cx="2932.7" cy="1424.0" r="11.2" fill="#fff" stroke="#e85a5a" stroke-width="3.6"/>
<text x="2969.2" y="1432.5" font-family="'Liberation Sans', sans-serif" font-size="24.5" letter-spacing="-0.1" fill="#222">"G1 Eden Space"</text>
<rect x="2907.7" y="1468.3999999999999" width="50" height="4" fill="#67b8d8"/>
<circle cx="2932.7" cy="1470.3999999999999" r="11.2" fill="#fff" stroke="#67b8d8" stroke-width="3.6"/>
<text x="2969.2" y="1478.9" font-family="'Liberation Sans', sans-serif" font-size="24.5" letter-spacing="0.24" fill="#222">"Compressed Class Space"</text>
<path d="M3457.9 1204H3471.1M3464.7 1197V1210.5M3464.7 1213.7V1227H3487.9V1204H3474.9" stroke="#5a5a5a" stroke-width="2.4" fill="none"/>
<path d="M3460.2999999999997 1269.5V1283.5H3485.5V1259.9H3460.6M3467.9 1253.0L3460.1 1259.9L3467.9 1266.1" stroke="#5a5a5a" stroke-width="2.4" fill="none"/>
<path d="M3472.6 1309.5V1333.1M3459.2999999999997 1321.0L3472.6 1333.1L3486.2999999999997 1321.0M3459.2999999999997 1331.5V1340.3H3486.2999999999997V1331.5" stroke="#5a5a5a" stroke-width="2.4" fill="none"/>
<circle cx="3472.6" cy="1380" r="14.6" stroke="#5a5a5a" stroke-width="3.2" fill="none"/>
<path d="M3472.6 1369V1381L3480.1 1386.5" stroke="#5a5a5a" stroke-width="3" fill="none"/>
<path d="M3458.6 1380H3462.1M3486.6 1380H3483.1M3472.6 1394V1390.5" stroke="#5a5a5a" stroke-width="3" fill="none"/>
<circle cx="3472.6" cy="1435.6" r="14.6" stroke="#5a5a5a" stroke-width="3.2" fill="none"/>
<path d="M3472.6 1424.6V1436.6L3480.1 1442.1" stroke="#5a5a5a" stroke-width="3" fill="none"/>
<path d="M3458.6 1435.6H3462.1M3486.6 1435.6H3483.1M3472.6 1449.6V1446.1" stroke="#5a5a5a" stroke-width="3" fill="none"/>
<circle cx="3472.6" cy="1491" r="14.6" stroke="#5a5a5a" stroke-width="3.2" fill="none"/>
<path d="M3472.6 1480V1492L3480.1 1497.5" stroke="#5a5a5a" stroke-width="3" fill="none"/>
<path d="M3458.6 1491H3462.1M3486.6 1491H3483.1M3472.6 1505V1501.5" stroke="#5a5a5a" stroke-width="3" fill="none"/>
<circle cx="3472.6" cy="1547" r="14.6" stroke="#5a5a5a" stroke-width="3.2" fill="none"/>
<path d="M3472.6 1536V1548L3480.1 1553.5" stroke="#5a5a5a" stroke-width="3" fill="none"/>
<path d="M3458.6 1547H3462.1M3486.6 1547H3483.1M3472.6 1561V1557.5" stroke="#5a5a5a" stroke-width="3" fill="none"/>
<circle cx="3472.6" cy="1603" r="14.6" stroke="#5a5a5a" stroke-width="3.2" fill="none"/>
<path d="M3472.6 1592V1604L3480.1 1609.5" stroke="#5a5a5a" stroke-width="3" fill="none"/>
<path d="M3458.6 1603H3462.1M3486.6 1603H3483.1M3472.6 1617V1613.5" stroke="#5a5a5a" stroke-width="3" fill="none"/>
<circle cx="3472.6" cy="1659" r="14.6" stroke="#5a5a5a" stroke-width="3.2" fill="none"/>
<path d="M3472.6 1648V1660L3480.1 1665.5" stroke="#5a5a5a" stroke-width="3" fill="none"/>
<path d="M3458.6 1659H3462.1M3486.6 1659H3483.1M3472.6 1673V1669.5" stroke="#5a5a5a" stroke-width="3" fill="none"/>
<path d="M3485.1 1719A13.5 13.5 0 1 1 3482.6 1706" stroke="#5a5a5a" stroke-width="3" fill="none"/>
<path d="M3474.6 1705.5H3485.1V1696" stroke="#5a5a5a" stroke-width="3" fill="none"/>
<text x="1274" y="2018" font-family="'Liberation Mono', monospace" font-weight="bold" font-size="32" fill="#333">jvm_memory_pool_bytes_max.value</text>
<text x="2415" y="2018" font-family="'Liberation Mono', monospace" font-weight="bold" font-size="32" fill="#333">jvm_threads_state.count</text>
<path d="M2318.0 2004H2331.2M2324.7999999999997 1997V2010.5M2324.7999999999997 2013.7V2027H2348.0V2004H2335.0" stroke="#5a5a5a" stroke-width="2.4" fill="none"/>
<path d="M2320.3999999999996 2069.5V2083.5H2345.6V2059.9H2320.7M2328.0 2053.0L2320.2 2059.9L2328.0 2066.1" stroke="#5a5a5a" stroke-width="2.4" fill="none"/>
<path d="M2332.7 2109.5V2133.1M2319.3999999999996 2121.0L2332.7 2133.1L2346.3999999999996 2121.0M2319.3999999999996 2131.5V2140.3H2346.3999999999996V2131.5" stroke="#5a5a5a" stroke-width="2.4" fill="none"/>
<circle cx="2332.7" cy="2180" r="14.6" stroke="#5a5a5a" stroke-width="3.2" fill="none"/>
<path d="M2332.7 2169V2181L2340.2 2186.5" stroke="#5a5a5a" stroke-width="3" fill="none"/>
<path d="M2318.7 2180H2322.2M2346.7 2180H2343.2M2332.7 2194V2190.5" stroke="#5a5a5a" stroke-width="3" fill="none"/>
<circle cx="2332.7" cy="2235.6" r="14.6" stroke="#5a5a5a" stroke-width="3.2" fill="none"/>
<path d="M2332.7 2224.6V2236.6L2340.2 2242.1" stroke="#5a5a5a" stroke-width="3" fill="none"/>
<path d="M2318.7 2235.6H2322.2M2346.7 2235.6H2343.2M2332.7 2249.6V2246.1" stroke="#5a5a5a" stroke-width="3" fill="none"/>
<circle cx="2332.7" cy="2291" r="14.6" stroke="#5a5a5a" stroke-width="3.2" fill="none"/>
<path d="M2332.7 2280V2292L2340.2 2297.5" stroke="#5a5a5a" stroke-width="3" fill="none"/>
<path d="M2318.7 2291H2322.2M2346.7 2291H2343.2M2332.7 2305V2301.5" stroke="#5a5a5a" stroke-width="3" fill="none"/>
<circle cx="2332.7" cy="2347" r="14.6" stroke="#5a5a5a" stroke-width="3.2" fill="none"/>
<path d="M2332.7 2336V2348L2340.2 2353.5" stroke="#5a5a5a" stroke-width="3" fill="none"/>
<path d="M2318.7 2347H2322.2M2346.7 2347H2343.2M2332.7 2361V2357.5" stroke="#5a5a5a" stroke-width="3" fill="none"/>
<circle cx="2332.7" cy="2403" r="14.6" stroke="#5a5a5a" stroke-width="3.2" fill="none"/>
<path d="M2332.7 2392V2404L2340.2 2409.5" stroke="#5a5a5a" stroke-width="3" fill="none"/>
<path d="M2318.7 2403H2322.2M2346.7 2403H2343.2M2332.7 2417V2413.5" stroke="#5a5a5a" stroke-width="3" fill="none"/>
<circle cx="2332.7" cy="2459" r="14.6" stroke="#5a5a5a" stroke-width="3.2" fill="none"/>
<path d="M2332.7 2448V2460L2340.2 2465.5" stroke="#5a5a5a" stroke-width="3" fill="none"/>
<path d="M2318.7 2459H2322.2M2346.7 2459H2343.2M2332.7 2473V2469.5" stroke="#5a5a5a" stroke-width="3" fill="none"/>
<path d="M2345.2 2519A13.5 13.5 0 1 1 2342.7 2506" stroke="#5a5a5a" stroke-width="3" fill="none"/>
<path d="M2334.7 2505.5H2345.2V2496" stroke="#5a5a5a" stroke-width="3" fill="none"/>
<path d="M3457.9 2004H3471.1M3464.7 1997V2010.5M3464.7 2013.7V2027H3487.9V2004H3474.9" stroke="#5a5a5a" stroke-width="2.4" fill="none"/>
<path d="M3460.2999999999997 2069.5V2083.5H3485.5V2059.9H3460.6M3467.9 2053.0L3460.1 2059.9L3467.9 2066.1" stroke="#5a5a5a" stroke-width="2.4" fill="none"/>
<path d="M3472.6 2109.5V2133.1M3459.2999999999997 2121.0L3472.6 2133.1L3486.2999999999997 2121.0M3459.2999999999997 2131.5V2140.3H3486.2999999999997V2131.5" stroke="#5a5a5a" stroke-width="2.4" fill="none"/>
<circle cx="3472.6" cy="2180" r="14.6" stroke="#5a5a5a" stroke-width="3.2" fill="none"/>
<path d="M3472.6 2169V2181L3480.1 2186.5" stroke="#5a5a5a" stroke-width="3" fill="none"/>
<path d="M3458.6 2180H3462.1M3486.6 2180H3483.1M3472.6 2194V2190.5" stroke="#5a5a5a" stroke-width="3" fill="none"/>
<circle cx="3472.6" cy="2235.6" r="14.6" stroke="#5a5a5a" stroke-width="3.2" fill="none"/>
<path d="M3472.6 2224.6V2236.6L3480.1 2242.1" stroke="#5a5a5a" stroke-width="3" fill="none"/>
<path d="M3458.6 2235.6H3462.1M3486.6 2235.6H3483.1M3472.6 2249.6V2246.1" stroke="#5a5a5a" stroke-width="3" fill="none"/>
<circle cx="3472.6" cy="2291" r="14.6" stroke="#5a5a5a" stroke-width="3.2" fill="none"/>
<path d="M3472.6 2280V2292L3480.1 2297.5" stroke="#5a5a5a" stroke-width="3" fill="none"/>
<path d="M3458.6 2291H3462.1M3486.6 2291H3483.1M3472.6 2305V2301.5" stroke="#5a5a5a" stroke-width="3" fill="none"/>
<circle cx="3472.6" cy="2347" r="14.6" stroke="#5a5a5a" stroke-width="3.2" fill="none"/>
<path d="M3472.6 2336V2348L3480.1 2353.5" stroke="#5a5a5a" stroke-width="3" fill="none"/>
<path d="M3458.6 2347H3462.1M3486.6 2347H3483.1M3472.6 2361V2357.5" stroke="#5a5a5a" stroke-width="3" fill="none"/>
<circle cx="3472.6" cy="2403" r="14.6" stroke="#5a5a5a" stroke-width="3.2" fill="none"/>
<path d="M3472.6 2392V2404L3480.1 2409.5" stroke="#5a5a5a" stroke-width="3" fill="none"/>
<path d="M3458.6 2403H3462.1M3486.6 2403H3483.1M3472.6 2417V2413.5" stroke="#5a5a5a" stroke-width="3" fill="none"/>
<circle cx="3472.6" cy="2459" r="14.6" stroke="#5a5a5a" stroke-width="3.2" fill="none"/>
<path d="M3472.6 2448V2460L3480.1 2465.5" stroke="#5a5a5a" stroke-width="3" fill="none"/>
<path d="M3458.6 2459H3462.1M3486.6 2459H3483.1M3472.6 2473V2469.5" stroke="#5a5a5a" stroke-width="3" fill="none"/>
<path d="M3485.1 2519A13.5 13.5 0 1 1 3482.6 2506" stroke="#5a5a5a" stroke-width="3" fill="none"/>
<path d="M3474.6 2505.5H3485.1V2496" stroke="#5a5a5a" stroke-width="3" fill="none"/>
</svg>
<div class="a" style="left:1439px;top:1650px;width:692px;height:311px;background:#fff;border-radius:8px;box-shadow:0 0 20px rgba(0,0,0,.15)"></div>
<div class="t" style="left:1462px;top:1673px;font-size:28px;letter-spacing:0.38px;color:#555">2023–01–08 21:47:23</div>
<div class="a" style="left:1461px;top:1724.0px;width:20px;height:20px;border-radius:50%;background:#4a62be"></div>
<div class="t" style="left:1494px;top:1720.0px;font-size:28px;letter-spacing:0.98px;color:#555">"Metaspace"</div>
<div class="t" style="left:1900px;width:208px;text-align:right;top:1720.0px;font-size:28px;font-weight:bold;color:#555">51.8456</div>
<div class="a" style="left:1461px;top:1771.9px;width:20px;height:20px;border-radius:50%;background:#83c46c"></div>
<div class="t" style="left:1494px;top:1767.9px;font-size:28px;letter-spacing:0.8px;color:#555">"CodeHeap 'non–profiled nmethods'"</div>
<div class="t" style="left:1900px;width:208px;text-align:right;top:1767.9px;font-size:28px;font-weight:bold;color:#555">12.5112</div>
<div class="a" style="left:1461px;top:1819.8px;width:20px;height:20px;border-radius:50%;background:#f7bd4c"></div>
<div class="t" style="left:1494px;top:1815.8px;font-size:28px;letter-spacing:0.04px;color:#555">"G1 Old Gen"</div>
<div class="t" style="left:1900px;width:208px;text-align:right;top:1815.8px;font-size:28px;font-weight:bold;color:#555">40.8963</div>
<div class="a" style="left:1461px;top:1867.7px;width:20px;height:20px;border-radius:50%;background:#e85a5a"></div>
<div class="t" style="left:1494px;top:1863.7px;font-size:28px;letter-spacing:0.08px;color:#555">"G1 Eden Space"</div>
<div class="t" style="left:1900px;width:208px;text-align:right;top:1863.7px;font-size:28px;font-weight:bold;color:#555">187</div>
<div class="a" style="left:1461px;top:1915.6px;width:20px;height:20px;border-radius:50%;background:#67b8d8"></div>
<div class="t" style="left:1494px;top:1911.6px;font-size:28px;letter-spacing:0.5px;color:#555">"Compressed Class Space"</div>
<div class="t" style="left:1900px;width:208px;text-align:right;top:1911.6px;font-size:28px;font-weight:bold;color:#555">6.669</div>
<div class="a" style="left:3844px;top:714px;width:96px;height:96px;background:#3a48ad;border-radius:8px 0 0 8px"></div>
<svg style="left:3814px;top:684px" width="156" height="156"><path d="M72.51 65.67 L73.65 60.53 L82.35 60.53 L83.49 65.67 A13.50 13.50 0 0 1 85.94 67.08 L90.95 65.50 L95.30 73.04 L91.43 76.59 A13.50 13.50 0 0 1 91.43 79.41 L95.30 82.96 L90.95 90.50 L85.94 88.92 A13.50 13.50 0 0 1 83.49 90.33 L82.35 95.47 L73.65 95.47 L72.51 90.33 A13.50 13.50 0 0 1 70.06 88.92 L65.05 90.50 L60.70 82.96 L64.57 79.41 A13.50 13.50 0 0 1 64.57 76.59 L60.70 73.04 L65.05 65.50 L70.06 67.08 A13.50 13.50 0 0 1 72.51 65.67 Z" stroke="#fff" stroke-width="3.4" fill="none" stroke-linejoin="round"/><circle cx="78" cy="78" r="6.5" stroke="#fff" stroke-width="3.4" fill="none"/></svg>
<div class="a" style="left:3812px;top:1750px;width:64px;height:64px;border-radius:50%;background:#fff;box-shadow:0 6px 50px rgba(0,0,0,.13)"></div>
<svg style="left:3814px;top:1752px" width="60" height="60"><path d="M18 16.5L45 43.5" stroke="#111" stroke-width="10" stroke-linecap="round"/><path d="M18 16.5L45 43.5" stroke="#fff" stroke-width="4.2" stroke-linecap="round"/><path d="M20.5 21.5L24 18" stroke="#111" stroke-width="2.5"/><path d="M33.5 12.5H44.5M39 7V18M10 36.6H20M15 31.6V41.6" stroke="#111" stroke-width="3"/><circle cx="47" cy="25.6" r="3" fill="#111"/><circle cx="27" cy="43.8" r="1.8" fill="#111"/></svg>
<div class="a" style="left:3940px;top:234px;width:12px;height:1784px;background:#dcdde1"></div>
<div class="a" style="left:3938px;top:938px;width:14px;height:682px;background:#6b6b6b;border:1px solid #3a3a3a"></div>
</div></body></html>
